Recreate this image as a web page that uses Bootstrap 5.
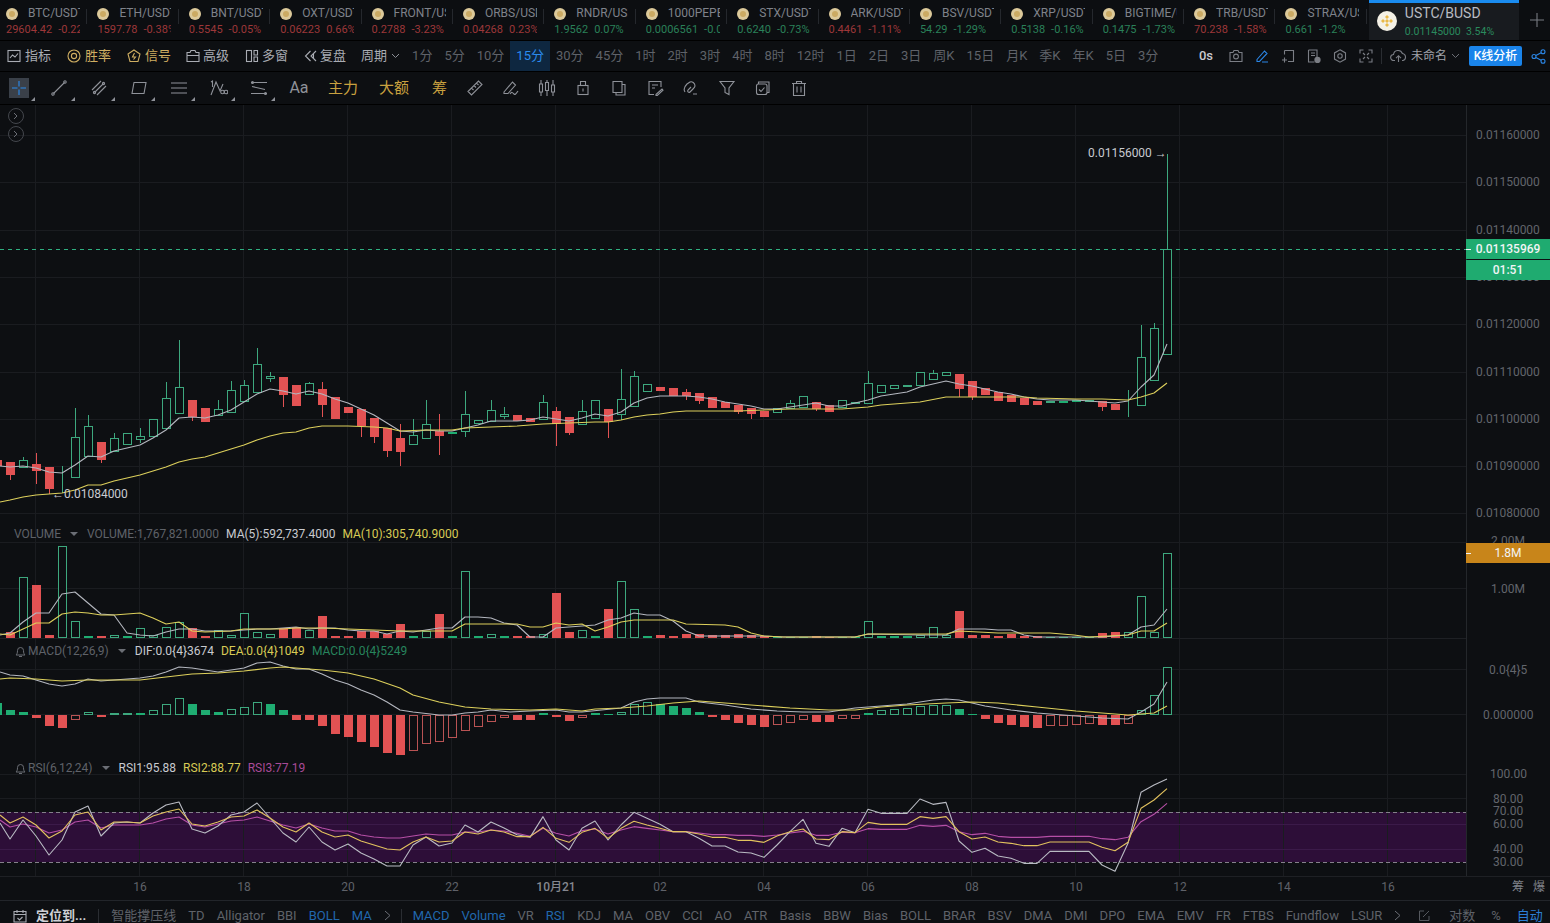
<!DOCTYPE html>
<html lang="zh">
<head>
<meta charset="utf-8">
<title>USTC/BUSD</title>
<link href="https://cdn.jsdelivr.net/npm/bootstrap@5.3.3/dist/css/bootstrap.min.css" rel="stylesheet">
<style>
  html, body { height: 100%; overflow: hidden; }
  body { background: #0d0f12; color: #8b8e95; font-family: Roboto, "Noto Sans CJK SC", sans-serif; font-size: 13px; }
  .page-shell { width: 1550px; height: 923px; }
  svg { display: block; }
  .ico { width: 14px; height: 14px; fill: none; stroke: currentColor; stroke-width: 1.1; flex: none; }

  /* ticker */
  .ticker-bar { height: 41px; border-bottom: 1px solid #000; background: #0c0e11; }
  .tick-item { width: 91.4px; flex: none; padding: 6px 0 0 6px; position: relative; }
  .tick-item::after { content: ""; position: absolute; right: 4px; top: 9px; height: 15px; border-right: 1px solid #25282d; }
  .tick-coin { width: 12px; height: 12px; border-radius: 50%; background: #dcc99a; flex: none; display: flex; align-items: center; justify-content: center; }
  .tick-coin::after { content: ""; width: 6px; height: 6px; border-radius: 50%; background: #cbaa63; }
  .tick-name { width: 52px; margin-left: 10px; overflow: hidden; white-space: nowrap; font-size: 12px; line-height: 15px; color: #7f828a; }
  .tick-vals { width: 74px; overflow: hidden; white-space: nowrap; font-size: 11px; line-height: 13px; margin-top: 2px; }
  .tick-vals span + span { margin-left: 6px; }
  .tick-down { color: #9c3739; }
  .tick-up { color: #2a8059; }
  .tick-active { width: 150px; flex: none; background: #181b1f; border-top: 3px solid #1a8cf0; padding: 1px 0 0 8px; margin-left: -2px; }
  .tick-active-coin { width: 20px; height: 20px; background: #f4f1e6; border-radius: 50%; flex: none; margin-top: 7px; }
  .tick-active-name { font-size: 14px; line-height: 18px; color: #b9bcc3; }
  .tick-active-vals { font-size: 10.5px; line-height: 13px; color: #2a8a5e; margin-top: 3px; }
  .tick-add { width: 31px; padding-left: 5px; color: #777a81; }

  /* toolbars */
  .period-bar { height: 31px; border-bottom: 1px solid #000; padding: 0 4px 0 7px; }
  .menu-item { color: #a9acb3; gap: 4px; }
  .menu-tight { gap: 3px; }
  .menu-gold { color: #cfae62; }
  .menu-group { gap: 16px; }
  .period-group { gap: 12px; margin-left: 12px; color: #5f6269; }
  .period-on { background: #0e2740; color: #2b8bee; margin: 0 -6px; padding: 0 6px; line-height: 30px; }
  .right-group { gap: 12px; color: #7b7e85; }
  .right-blue { color: #2b86e6; }
  .right-sep { width: 1px; height: 16px; background: #2a2d32; margin: 0 -4px; }
  .save-name { color: #a0a3aa; font-size: 12px; }
  .analysis-btn { background: #1a84ea; color: #fff; font-size: 12px; font-weight: 500; width: 53px; height: 20px; line-height: 20px; text-align: center; border-radius: 2px; margin: 0 -3px 0 -3px; white-space: nowrap; }
  .draw-bar { height: 33px; border-bottom: 1px solid #000; padding-left: 9px; gap: 20px; color: #8f9299; }
  .draw-tool { width: 20px; height: 20px; position: relative; display: flex; align-items: center; justify-content: center; flex: none; }
  .draw-tool .ico { width: 18px; height: 18px; }
  .draw-on { background: #3a4049; color: #2b8bee; }
  .draw-has-menu::after { content: ""; position: absolute; right: -6px; bottom: -3px; border-style: solid; border-width: 0 0 4px 4px; border-color: transparent transparent #8f9299 transparent; }
  .draw-word { color: #c9a13f; font-size: 15px; margin-left: -1px; }
  .draw-word-wide { margin-left: 1px; }
  .draw-word-solo { margin-left: 3px; }
  .draw-tail { gap: 16px; margin-left: -2px; }

  /* chart panes */
  .chart-pane { position: relative; overflow: hidden; }
  .chart-pane > svg { position: absolute; left: 0; top: 0; }
  .pane-main { height: 420px; }
  .pane-vol { height: 116px; }
  .pane-macd { height: 117px; }
  .pane-rsi { height: 118px; }
  .pane-legend { position: relative; font-size: 12px; line-height: 16px; gap: 7px; padding: 2px 0 0 14px; white-space: nowrap; }
  .pane-vol .pane-legend { padding-top: 1px; }
  .legend-name { color: #5f6269; }
  .legend-caret { width: 0; height: 0; border: 4px solid transparent; border-top-color: #6b6e75; border-bottom: 0; margin: 0 2px 0 9px; }
  .legend-white { color: #c8cad0; }
  .legend-yellow { color: #d8cb55; }
  .legend-green { color: #27845d; }
  .legend-pink { color: #a94b98; }
  .legend-bell { width: 13px; height: 13px; fill: none; stroke: #6b6e75; stroke-width: 1; margin-right: -6px; flex: none; }
  .fold-btns { position: absolute; left: 8px; top: 3px; }
  .fold-btn { width: 16px; height: 16px; border: 1px solid #44474d; border-radius: 50%; margin-bottom: 2px; color: #6b6e75; display: flex; align-items: center; justify-content: center; }
  .price-tag { position: absolute; left: 1466px; width: 84px; text-align: center; color: #f2f4f5; font-size: 12px; }
  .tag-price, .tag-vol { font-weight: 500; }
  .tag-price::before, .tag-vol::before { content: ""; position: absolute; left: 0; top: 10px; width: 5px; border-top: 1px solid #f2f4f5; }
  .tag-price { top: 134px; height: 20px; line-height: 20px; background: #1fab70; }
  .tag-time { top: 155px; height: 20px; line-height: 20px; background: #1fab70; font-weight: 500; }
  .tag-vol { top: 18px; height: 20px; line-height: 20px; background: #c8851a; font-weight: 400; }

  /* bottom */
  .time-axis { height: 24px; border-top: 1px solid #1e2024; padding-left: 88px; color: #5f6269; font-size: 12px; line-height: 21px; }
  .time-label { width: 104px; text-align: center; flex: none; }
  .time-month { color: #85888f; font-weight: 500; }
  .time-mode { gap: 9px; color: #7f828a; margin-left: 72px; }
  .bottom-bar { height: 23px; border-top: 1px solid #22252a; padding: 7px 0 0 13px; gap: 12px; font-size: 13px; color: #5f6269; white-space: nowrap; }
  .locate-text { color: #cfd1d6; font-weight: 700; margin-left: -3px; }
  .bottom-sep { width: 1px; height: 14px; background: #2a2d32; }
  .bottom-sep-mid { margin: 0 -1px 0 -2px; }
  .bottom-on { color: #2167ad; }
  .bottom-auto { color: #2b7fd4; margin-left: 4px; }
  .bottom-edit { margin-left: 6px; }
  .bottom-log { margin-left: 7px; }
</style>
</head>
<body>
<div class="page-shell d-flex flex-column">

  <!-- ticker tabs -->
  <div class="ticker-bar d-flex">
    <div id="tickers" class="d-flex"></div>
    <div class="tick-active d-flex gap-2">
      <div class="tick-active-coin">
        <svg viewBox="0 0 20 20" width="20" height="20"><g fill="#e9b949"><path d="M10 4l2 2-2 2-2-2z"/><path d="M5.5 8l2 2-2 2-2-2z" transform="translate(.5 0)"/><path d="M14.5 8l2 2-2 2-2-2z" transform="translate(-.5 0)"/><path d="M10 8l2 2-2 2-2-2z"/><path d="M10 12l2 2-2 2-2-2z"/></g></svg>
      </div>
      <div>
        <div class="tick-active-name">USTC/BUSD</div>
        <div class="tick-active-vals">0.01145000&nbsp; 3.54%</div>
      </div>
    </div>
    <div class="tick-add d-flex align-items-center justify-content-center">
      <svg class="ico" viewBox="0 0 14 14"><path d="M7 0v14M0 7h14"/></svg>
    </div>
  </div>

  <!-- period bar -->
  <div class="period-bar d-flex align-items-center">
    <div class="menu-group d-flex align-items-center">
      <div class="menu-item d-flex align-items-center"><svg class="ico" viewBox="0 0 14 14"><rect x="1" y="1.5" width="12" height="11"/><path d="M3 9l2.5-3 2.5 2 3-3.5"/></svg>指标</div>
      <div class="menu-item menu-gold d-flex align-items-center"><svg class="ico" viewBox="0 0 14 14"><circle cx="7" cy="7" r="6"/><circle cx="7" cy="7" r="2.6"/></svg>胜率</div>
      <div class="menu-item menu-gold d-flex align-items-center"><svg class="ico" viewBox="0 0 14 14"><path d="M7 1l6 4-2 7.5H3L1 5z"/><path d="M7.5 4L5.5 8h3l-2 2.5"/></svg>信号</div>
      <div class="menu-item menu-tight d-flex align-items-center" style="margin-left:-1px"><svg class="ico" viewBox="0 0 14 14"><path d="M1 12.5V3.5h3l1-2h4l1 2h3v9zM1 6.5h12"/></svg>高级</div>
      <div class="menu-item menu-tight d-flex align-items-center"><svg class="ico" viewBox="0 0 14 14"><rect x="1.5" y="1.5" width="5" height="11"/><path d="M9 1.5h3.5V6H9zM9 8h3.5v4.5H9z"/></svg>多窗</div>
      <div class="menu-item d-flex align-items-center" style="gap:2px"><svg class="ico" viewBox="0 0 14 14"><path d="M6.5 2L1.5 7l5 5M12 2L7 7l5 5M9.5 4.500v5"/></svg>复盘</div>
      <div class="menu-item d-flex align-items-center" style="margin-left:-1px">周期<svg width="9" height="6" viewBox="0 0 9 6" fill="none" stroke="#8b8e95"><path d="M1 1l3.5 3.5L8 1"/></svg></div>
    </div>
    <div class="period-group d-flex align-items-center">
      <span>1分</span><span>5分</span><span>10分</span><span class="period-on">15分</span><span>30分</span><span>45分</span><span>1时</span><span>2时</span><span>3时</span><span>4时</span><span>8时</span><span>12时</span><span>1日</span><span>2日</span><span>3日</span><span>周K</span><span>15日</span><span>月K</span><span>季K</span><span>年K</span><span>5日</span><span>3分</span>
    </div>
    <div class="right-group d-flex align-items-center ms-auto">
      <span class="legend-white fw-medium me-1">0s</span>
      <svg class="ico" viewBox="0 0 14 14"><path d="M1 3.5h3l1-2h4l1 2h3v9H1z"/><circle cx="7" cy="7.5" r="2.4"/></svg>
      <svg class="ico right-blue" viewBox="0 0 14 14"><path d="M2 10.5L9.5 2l2.5 2.5L4.5 12.5H2zM7 13h6"/></svg>
      <svg class="ico" viewBox="0 0 14 14"><path d="M3.5 1.5h9v11H7M1 11h5M3.5 8.5v5M3.5 1.5v4"/></svg>
      <svg class="ico" viewBox="0 0 14 14"><path d="M1.5 1h8.5v7M1.5 1v12h6M4 4h4M4 6.5h4"/><circle cx="10.5" cy="11" r="2.6" fill="#7b7e85"/></svg>
      <svg class="ico" viewBox="0 0 14 14"><path d="M7 .8l5.5 3.1v6.2L7 13.2 1.5 10.1V3.9z"/><circle cx="7" cy="7" r="2.2"/></svg>
      <svg class="ico" viewBox="0 0 14 14"><path d="M1 4.5V1h3.5M9.5 1H13v3.5M13 9.5V13H9.5M4.500 13H1V9.5M4 4l2 2M10 4L8 6M10 10L8 8M4 10l2-2"/></svg>
      <span class="right-sep"></span>
      <div class="d-flex align-items-center gap-1">
        <svg class="ico" style="width:17px" viewBox="0 0 17 14"><path d="M5 11.5H3.8a3 3 0 0 1-.3-6A4.6 4.6 0 0 1 12.4 4.5a3.6 3.6 0 0 1 .6 7H12M8.5 13V7M6 9.2l2.5-2.5L11 9.2"/></svg>
        <span class="save-name">未命名</span>
        <svg width="9" height="6" viewBox="0 0 9 6" fill="none" stroke="#6b6e75"><path d="M1 1l3.5 3.5L8 1"/></svg>
      </div>
      <span class="analysis-btn">K线分析</span>
      <svg class="ico right-blue" style="width:15px;height:15px" viewBox="0 0 15 15"><circle cx="3" cy="7.5" r="2"/><circle cx="12" cy="2.8" r="2"/><circle cx="12" cy="12.2" r="2"/><path d="M4.8 6.5l5.4-2.8M4.8 8.5l5.4 2.8"/></svg>
    </div>
  </div>

  <!-- drawing tools -->
  <div class="draw-bar d-flex align-items-center">
    <div class="draw-tool draw-on draw-has-menu"><svg class="ico" viewBox="0 0 18 18"><path d="M9 2v5.5M9 10.5V16M2 9h5.5M10.5 9H16"/></svg></div>
    <div class="draw-tool draw-has-menu"><svg class="ico" viewBox="0 0 18 18"><path d="M3.500 14.500L14.500 3.500"/><circle cx="3" cy="15" r="1.2"/><circle cx="15" cy="3" r="1.2"/></svg></div>
    <div class="draw-tool draw-has-menu"><svg class="ico" viewBox="0 0 18 18"><path d="M2 11L11 2M4.500 13.500L13.500 4.500M7 16L16 7"/><circle cx="4.500" cy="13.500" r="1.1"/><circle cx="13.500" cy="4.500" r="1.1"/></svg></div>
    <div class="draw-tool draw-has-menu"><svg class="ico" viewBox="0 0 18 18"><path d="M4 3.500h12l-2 11H2z"/></svg></div>
    <div class="draw-tool draw-has-menu"><svg class="ico" viewBox="0 0 18 18"><path d="M1 4h16M1 9h16M1 14h16"/></svg></div>
    <div class="draw-tool draw-has-menu"><svg class="ico" viewBox="0 0 18 18"><path d="M1 3l1.500-1v6M1 16L6 3l4 9 3-7"/><circle cx="12.500" cy="13" r="1.800"/><circle cx="16" cy="13" r="1.800"/></svg></div>
    <div class="draw-tool draw-has-menu"><svg class="ico" viewBox="0 0 18 18"><path d="M1 3.500h16M1 14.500h16M2 7.500l13 3"/><circle cx="2.500" cy="3.500" r="1"/><circle cx="15.500" cy="14.500" r="1"/></svg></div>
    <div class="draw-tool fs-6">Aa</div>
    <span class="draw-word">主力</span>
    <span class="draw-word draw-word-wide">大额</span>
    <span class="draw-word draw-word-solo">筹</span>
    <div class="d-flex draw-tail">
      <div class="draw-tool"><svg class="ico" viewBox="0 0 18 18"><path d="M2 12.500L12.500 2 16 5.500 5.500 16zM5.500 9l2 2M8 6.500l2 2M10.500 4l2 2"/></svg></div>
      <div class="draw-tool"><svg class="ico" viewBox="0 0 18 18"><path d="M2 13L10.500 3l3 3L6 14.500H2zM8 15c2-3 3-1 4 0s2 0 4-3"/></svg></div>
      <div class="draw-tool"><svg class="ico" viewBox="0 0 18 18"><path d="M3 1v16M9 1v16M15 1v16"/><path d="M1.500 5h3v8h-3zM7.500 3.500h3v8h-3zM13.500 6h3v7h-3z" fill="#0d0f12"/></svg></div>
      <div class="draw-tool"><svg class="ico" viewBox="0 0 18 18"><rect x="4" y="6.500" width="10" height="9"/><path d="M6.500 6.500V2.500h5v4M9 9.500v3"/></svg></div>
      <div class="draw-tool"><svg class="ico" viewBox="0 0 18 18"><path d="M3 2.500h9v11H3zM12 5.500h3V16H6v-2.500"/></svg></div>
      <div class="draw-tool"><svg class="ico" viewBox="0 0 18 18"><path d="M15 8V2.500H3v13h5M6 6h6M6 9h3"/><path d="M10 15.500l6-5.500 1 1.200-5.700 5.300H10z"/></svg></div>
      <div class="draw-tool"><svg class="ico" viewBox="0 0 18 18"><path d="M3 13c-2-3 0-6 2-8l3-2c2-1 5 1 5 4 0 1-1 2-2 3l-3 3c-1 1-3 0-2-2l3-3M11 15h4"/></svg></div>
      <div class="draw-tool"><svg class="ico" viewBox="0 0 18 18"><path d="M2 2.500h14L11 9v6.500l-4-2V9z"/></svg></div>
      <div class="draw-tool"><svg class="ico" viewBox="0 0 18 18"><path d="M4.500 5V3H15v10.500h-2"/><rect x="2.500" y="5" width="10.500" height="10.500" rx="2"/><path d="M5 10.500l2 2 3.500-4"/></svg></div>
      <div class="draw-tool"><svg class="ico" viewBox="0 0 18 18"><path d="M2 4.500h14M6.500 4.500v-2h5v2M3.500 4.500v12h11v-12M7 7.500v6M11 7.500v6"/></svg></div>
    </div>
  </div>

  <!-- main chart -->
  <div class="chart-pane pane-main" data-top="105">
    <div class="fold-btns">
      <div class="fold-btn"><svg width="6" height="8" viewBox="0 0 6 8" fill="none" stroke="currentColor"><path d="M1 1l3 3-3 3"/></svg></div>
      <div class="fold-btn"><svg width="6" height="8" viewBox="0 0 6 8" fill="none" stroke="currentColor"><path d="M1 1l3 3-3 3"/></svg></div>
    </div>
    <div class="price-tag tag-price">0.01135969</div>
    <div class="price-tag tag-time">01:51</div>
  </div>

  <!-- volume -->
  <div class="chart-pane pane-vol" data-top="525">
    <div class="pane-legend d-flex align-items-center">
      <span class="legend-name d-flex align-items-center">VOLUME<i class="legend-caret"></i></span>
      <span class="legend-name">VOLUME:1,767,821.0000</span>
      <span class="legend-white">MA(5):592,737.4000</span>
      <span class="legend-yellow">MA(10):305,740.9000</span>
    </div>
    <div class="price-tag tag-vol">1.8M</div>
  </div>

  <!-- macd -->
  <div class="chart-pane pane-macd" data-top="641">
    <div class="pane-legend d-flex align-items-center">
      <svg class="legend-bell" viewBox="0 0 13 13"><path d="M2 10h9c-1-1-1.5-2-1.5-4.5a3 3 0 0 0-6 0C3.500 8 3 9 2 10zM5 11.500h3"/></svg>
      <span class="legend-name d-flex align-items-center">MACD(12,26,9)<i class="legend-caret"></i></span>
      <span class="legend-white">DIF:0.0{4}3674</span>
      <span class="legend-yellow">DEA:0.0{4}1049</span>
      <span class="legend-green">MACD:0.0{4}5249</span>
    </div>
  </div>

  <!-- rsi -->
  <div class="chart-pane pane-rsi" data-top="758">
    <div class="pane-legend d-flex align-items-center">
      <svg class="legend-bell" viewBox="0 0 13 13"><path d="M2 10h9c-1-1-1.5-2-1.5-4.5a3 3 0 0 0-6 0C3.500 8 3 9 2 10zM5 11.500h3"/></svg>
      <span class="legend-name d-flex align-items-center">RSI(6,12,24)<i class="legend-caret"></i></span>
      <span class="legend-white">RSI1:95.88</span>
      <span class="legend-yellow">RSI2:88.77</span>
      <span class="legend-pink">RSI3:77.19</span>
    </div>
  </div>

  <!-- time axis -->
  <div class="time-axis d-flex">
    <span class="time-label">16</span><span class="time-label">18</span><span class="time-label">20</span><span class="time-label">22</span><span class="time-label time-month">10月21</span><span class="time-label">02</span><span class="time-label">04</span><span class="time-label">06</span><span class="time-label">08</span><span class="time-label">10</span><span class="time-label">12</span><span class="time-label">14</span><span class="time-label">16</span>
    <span class="time-mode d-flex"><span>筹</span><span>爆</span></span>
  </div>

  <!-- indicator list -->
  <div class="bottom-bar d-flex align-items-center">
    <svg class="ico" viewBox="0 0 14 14" style="color:#a9acb3"><path d="M1 2.500h12V13H1zM1 5.500h12M4 1v3M10 1v3M4.500 9l2 2 3-3"/></svg>
    <span class="locate-text">定位到...</span>
    <span class="bottom-sep"></span>
    <span>智能撑压线</span><span>TD</span><span>Alligator</span><span>BBI</span><span class="bottom-on">BOLL</span><span class="bottom-on">MA</span>
    <svg width="7" height="11" viewBox="0 0 7 11" fill="none" stroke="#6b6e75"><path d="M1 1l5 4.500-5 4.500"/></svg>
    <span class="bottom-sep bottom-sep-mid"></span>
    <span class="bottom-on">MACD</span><span class="bottom-on">Volume</span><span>VR</span><span class="bottom-on">RSI</span><span>KDJ</span><span>MA</span><span>OBV</span><span>CCI</span><span>AO</span><span>ATR</span><span>Basis</span><span>BBW</span><span>Bias</span><span>BOLL</span><span>BRAR</span><span>BSV</span><span>DMA</span><span>DMI</span><span>DPO</span><span>EMA</span><span>EMV</span><span>FR</span><span>FTBS</span><span>Fundflow</span><span>LSUR</span>
    <svg width="7" height="11" viewBox="0 0 7 11" fill="none" stroke="#6b6e75"><path d="M1 1l5 4.500-5 4.500"/></svg>
    <svg class="bottom-edit" width="11" height="11" viewBox="0 0 11 11" fill="none" stroke="#55585e"><path d="M10 6v4.500H.5V1H5M4 7l6-6"/></svg>
    <span class="bottom-log">对数</span><span class="ms-1">%</span><span class="bottom-auto">自动</span>
  </div>
</div>

<script src="https://cdn.jsdelivr.net/npm/bootstrap@5.3.3/dist/js/bootstrap.bundle.min.js"></script>
<script>
  const tickers = [
    ['BTC/USDT', '29604.42', '-0.22%', 0], ['ETH/USDT', '1597.78', '-0.38%', 0], ['BNT/USDT', '0.5545', '-0.05%', 0],
    ['OXT/USDT', '0.06223', '0.66%', 0], ['FRONT/USDT', '0.2788', '-3.23%', 0], ['ORBS/USDT', '0.04268', '0.23%', 0],
    ['RNDR/USDT', '1.9562', '0.07%', 1], ['1000PEPE/USDT', '0.0006561', '-0.05%', 1], ['STX/USDT', '0.6240', '-0.73%', 1],
    ['ARK/USDT', '0.4461', '-1.11%', 0], ['BSV/USDT', '54.29', '-1.29%', 1], ['XRP/USDT', '0.5138', '-0.16%', 1],
    ['BIGTIME/USDT', '0.1475', '-1.73%', 1], ['TRB/USDT', '70.238', '-1.58%', 0], ['STRAX/USDT', '0.661', '-1.2%', 1]
  ];
  document.getElementById('tickers').innerHTML = tickers.map(t => `
    <div class="tick-item">
      <div class="d-flex align-items-center"><i class="tick-coin"></i><div class="tick-name">${t[0]}</div></div>
      <div class="tick-vals ${t[3] ? 'tick-up' : 'tick-down'}"><span>${t[1]}</span><span>${t[2]}</span></div>
    </div>`).join('');

  const RED = '#e25253', GREEN = '#3da87e', FILL = '#1fad72', WHITE = '#b4b7bf', YELLOW = '#ddd05c', PINK = '#b64fa6', BG = '#0d0f12', GRID = '#1a1c20';
  const AXIS_X = 1466;
  const gridX = [35.5, 139.5, 243.5, 347.5, 451.5, 555.5, 659.5, 763.5, 867.5, 971.5, 1075.5, 1179.5, 1283.5, 1387.5];
  const barX = i => 10 + 13 * i;

  // [kind, top, bottom, high, low], first entry sits at x=-3
  const candles = [
    ['r',460,466,460,466], ['r',462,475,462,480], ['g',460,468,457,468], ['r',464,471,453,484], ['r',467,489,467,494],
    ['g',477,478,466,493], ['g',437,478,408,478], ['g',426,457,415,457], ['r',442,460,442,463], ['g',438,452,433,452],
    ['g',433,445,433,445], ['g',436,440,428,443], ['g',419,437,419,437], ['g',398,429,382,429], ['g',387,414,340,414],
    ['r',400,417,400,421], ['r',408,422,408,422], ['g',409,416,400,416], ['g',390,413,381,413], ['g',385,402,380,402],
    ['g',364,393,348,393], ['g',376,379,372,382], ['r',377,395,377,407], ['r',385,406,385,406], ['g',383,395,382,395],
    ['r',389,405,382,417], ['r',397,419,397,419], ['r',407,413,407,413], ['r',409,426,409,437], ['r',418,437,418,443],
    ['r',428,451,428,457], ['r',438,452,424,466], ['g',435,445,419,445], ['g',424,439,400,439], ['r',431,436,414,455],
    ['f',432,434,432,434], ['g',414,432,391,437], ['g',420,424,420,424], ['g',410,422,400,422], ['g',414,417,407,419],
    ['r',415,421,415,421], ['r',418,422,418,422], ['g',402,420,395,420], ['r',411,424,407,446], ['r',417,433,417,435],
    ['g',411,425,400,425], ['g',400,419,400,419], ['r',409,422,409,438], ['g',399,415,369,420], ['g',376,407,371,407],
    ['g',384,392,384,392], ['r',387,391,387,391], ['r',388,396,388,396], ['r',392,396,389,400], ['r',393,401,393,404],
    ['r',397,408,397,408], ['r',402,408,402,408], ['r',405,412,405,414], ['r',408,414,408,419], ['r',411,417,411,417],
    ['g',408,413,408,413], ['g',403,409,400,409], ['g',396,408,396,408], ['r',402,409,402,411], ['r',405,412,405,412],
    ['g',400,408,400,408], ['g',402,404,402,404], ['g',383,404,371,404], ['g',385,393,385,393], ['g',385,389,385,389],
    ['g',385,387,385,387], ['g',372,386,372,386], ['g',373,380,370,380], ['g',372,376,372,376], ['r',374,389,374,397],
    ['r',381,397,381,400], ['r',388,395,388,395], ['r',392,401,392,401], ['r',395,402,395,402], ['r',398,405,398,405],
    ['r',401,405,401,405], ['g',401,403,401,403], ['f',401,403,401,403], ['f',400,402,400,402], ['f',400,402,400,402],
    ['r',401,407,401,411], ['r',404,410,404,410], ['g',405,406,390,417], ['g',357,406,325,406], ['g',328,381,323,381],
    ['g',249,355,154,355]
  ];

  const ma5 = [[0,466],[10,467],[23,466],[36,468],[49,472],[62,473],[75,465],[88,456],[101,457],[114,451],[140,445],[153,438],[166,430],[179,418],[192,417],[205,418],[218,415],[231,410],[244,402],[257,394],[270,389],[283,391],[296,394],[309,391],[322,394],[335,399],[348,403],[361,409],[374,415],[387,423],[400,431],[413,432],[426,430],[439,431],[452,431],[465,428],[478,425],[491,421],[504,421],[517,421],[530,420],[543,417],[556,419],[569,421],[582,418],[595,414],[608,416],[621,412],[634,403],[647,398],[660,396],[673,396],[686,396],[699,397],[712,399],[725,402],[738,404],[751,406],[764,409],[777,409],[790,407],[803,405],[816,403],[829,406],[842,406],[855,403],[868,400],[881,396],[894,394],[907,392],[920,387],[933,384],[946,381],[959,384],[972,386],[985,389],[998,392],[1011,394],[1024,397],[1037,399],[1050,400],[1063,400],[1076,400],[1089,401],[1102,402],[1115,403],[1128,401],[1141,387],[1154,375],[1167,344]];
  const ma10 = [[0,502],[10,500],[23,497],[36,495],[49,494],[62,493],[75,490],[88,485],[101,485],[114,481],[127,478],[140,475],[153,471],[166,467],[179,462],[192,459],[205,457],[218,453],[231,449],[244,445],[257,440],[270,436],[283,433],[296,432],[309,428],[322,426],[348,426],[374,427],[387,428],[400,431],[426,430],[452,430],[465,428],[491,427],[517,426],[543,424],[569,423],[595,422],[608,422],[621,420],[634,417],[647,415],[660,414],[673,412],[686,411],[738,411],[764,410],[790,409],[842,409],[868,407],[881,405],[907,403],[920,402],[946,397],[972,397],[1024,397],[1037,398],[1076,399],[1102,399],[1128,400],[1141,397],[1154,393],[1167,383]];

  const volBars = 'r632 g577 r585 r635 g546 g621 f636 r636 g635 f636 g628 g635 g627 g622 r628 r636 g630 g635 g613 g632 g634 r628 r627 g630 r616 r636 r636 r631 r631 r634 r624 f636 g631 r614 f636 g571 f636 g634 f636 r636 r636 g634 r593 r632 g630 f636 r609 g581 g609 f636 r635 r636 r634 r634 r635 r635 r634 r635 r636 f637 f637 f637 r636 r637 f637 f637 g621 f636 f636 f636 g635 g627 g635 r611 r635 r635 r636 r634 r636 r636 f637 f637 f637 f637 r633 r632 g632 g596 g632 g553'.split(' ');
  const volMa5 = [[0,635],[10,633],[23,622],[36,613],[49,613],[62,594],[75,592],[88,603],[101,614],[114,615],[127,633],[140,635],[153,636],[166,632],[179,629],[192,629],[205,631],[231,631],[244,630],[257,629],[270,629],[283,628],[296,627],[309,629],[322,628],[335,628],[348,630],[361,631],[374,631],[387,634],[400,631],[413,632],[426,630],[439,628],[452,628],[465,617],[478,617],[491,618],[504,623],[517,625],[530,637],[543,637],[556,628],[569,627],[595,625],[608,620],[621,618],[634,613],[647,615],[660,615],[673,621],[686,631],[699,636],[725,636],[764,636],[783,637],[855,637],[868,634],[920,635],[946,635],[959,629],[985,629],[998,630],[1011,630],[1024,635],[1037,637],[1102,637],[1128,635],[1141,627],[1154,625],[1167,609]];
  const volMa10 = [[0,634],[10,635],[23,629],[36,623],[49,623],[62,614],[75,612],[88,613],[101,615],[114,615],[127,614],[140,613],[153,618],[166,624],[179,622],[192,631],[205,632],[231,631],[244,629],[283,629],[296,628],[322,628],[348,629],[374,630],[400,631],[439,631],[452,631],[465,624],[491,624],[517,624],[530,627],[543,627],[556,623],[569,625],[582,624],[595,631],[608,627],[621,622],[634,620],[673,620],[686,624],[725,625],[738,627],[751,633],[764,636],[783,637],[855,637],[868,634],[946,634],[959,631],[998,633],[1050,633],[1074,635],[1089,637],[1128,635],[1141,631],[1154,631],[1167,623]];

  // kind + y of the bar end, zero line at 715; first entry sits at x=-3
  const macdBars = 'f703 f710 f712 r718 r726 r728 h720 g712 r717 g713 g713 f713 g710 g704 g698 f704 f710 f712 g709 g707 g702 f704 f710 r720 r720 r726 r734 r737 r742 r747 r753 r755 h751 h744 h742 h738 h731 h727 h722 h718 r720 r720 f713 r717 r721 h718 f713 f714 g712 g704 g702 f704 f706 f708 f712 r717 r720 r723 r725 r727 h725 h723 h720 r722 r722 h719 h719 f713 g710 g709 g708 g706 g705 g705 f709 f714 r719 r723 r725 r727 r728 h726 h726 h725 h724 r725 r725 h724 g710 g695 g667'.split(' ');
  const difLine = [[0,672],[10,675],[23,676],[36,680],[49,684],[62,686],[75,684],[88,679],[101,681],[114,680],[140,678],[153,676],[166,672],[179,667],[192,668],[218,672],[244,668],[257,663],[270,662],[283,666],[296,669],[309,669],[322,674],[335,680],[348,684],[361,690],[374,695],[387,702],[400,710],[413,712],[439,715],[452,715],[465,713],[478,712],[491,710],[510,712],[530,711],[556,710],[569,712],[582,712],[621,708],[634,702],[647,699],[660,698],[686,698],[699,702],[725,705],[751,709],[777,711],[803,712],[829,712],[855,708],[881,706],[907,704],[933,700],[946,699],[959,700],[985,706],[1011,710],[1037,713],[1076,716],[1102,718],[1128,719],[1141,712],[1154,704],[1167,682]];
  const deaLine = [[0,679],[10,678],[36,679],[62,681],[88,680],[114,680],[140,680],[166,677],[192,674],[218,673],[244,671],[270,668],[283,667],[309,669],[322,670],[348,673],[374,679],[400,688],[413,695],[439,702],[465,707],[491,709],[530,710],[556,709],[582,711],[595,709],[621,708],[647,706],[673,703],[699,701],[725,703],[751,705],[790,708],[829,710],[855,710],[881,707],[907,705],[946,703],[972,702],[998,703],[1037,707],[1076,711],[1115,714],[1128,715],[1154,713],[1167,706]];

  // rsi y values per bar, from x=10
  const rsiA = [839,820,836,855,840,812,806,836,823,822,823,813,805,802,829,833,826,815,812,803,818,833,842,827,842,850,844,853,859,866,866,845,837,846,843,825,832,822,828];
  const rsiB = [823,817,825,838,831,815,812,830,822,822,823,816,812,809,824,826,822,817,816,810,818,827,832,823,832,837,835,841,845,849,850,842,837,842,841,832,834,830,832];
  const rsiC = [827,824,827,833,830,822,820,828,825,825,825,823,819,817,825,827,824,821,820,817,821,825,828,824,828,831,831,835,837,838,838,836,834,835,835,832,832,830,831];
  // same from x=517, in zoomed units (760 + v/3)
  const rsiA2 = [224,232,170,240,270,205,183,240,195,157,175,193,215,215,235,258,258,276,279,292,255,215,178,250,259,205,218,148,160,160,160,117,133,127,243,277,265,288,295,310,310,274,274,274,274,315,334,250,97,75,57];
  const rsiB2 = [230,230,202,235,247,217,205,235,205,184,195,205,215,215,222,232,232,241,241,247,228,215,207,237,239,215,218,187,193,193,193,170,175,170,215,237,231,246,250,257,257,246,246,246,246,262,272,247,145,120,86];
  const rsiC2 = [220,229,205,220,228,212,207,222,210,200,205,210,215,215,219,224,224,226,226,229,225,219,214,226,226,217,218,206,208,208,208,196,199,196,215,224,220,229,232,232,232,229,229,229,229,236,239,232,185,163,130];
  const rsiPoints = (first, second, startY) => {
    const pts = [[0, startY]];
    first.forEach((y, i) => pts.push([barX(i), y]));
    second.forEach((v, i) => pts.push([barX(39 + i), 760 + v / 3]));
    return pts;
  };

  const polyline = (pts, color, w = 1.1) => `<polyline points="${pts.map(p => p.join(',')).join(' ')}" fill="none" stroke="${color}" stroke-width="${w}" stroke-linejoin="round"/>`;
  const hLine = (y, color = GRID, extra = '') => `<line x1="0" x2="${AXIS_X}" y1="${y}" y2="${y}" stroke="${color}" ${extra}/>`;
  const vLines = (top, bottom) => gridX.map(x => `<line x1="${x}" x2="${x}" y1="${top}" y2="${bottom}" stroke="${GRID}"/>`).join('')
    + `<line x1="${AXIS_X + .5}" x2="${AXIS_X + .5}" y1="${top}" y2="${bottom}" stroke="#24272b"/>`;
  const axisText = (x, y, text) => `<text x="${x}" y="${y + 4}" fill="#62656c" font-size="12">${text}</text>`;

  function barShape(kind, cx, top, bottom) {
    if (bottom - top < 1) bottom = top + 1;
    if (kind === 'r') return `<rect x="${cx - 4}" y="${top}" width="9" height="${bottom - top}" fill="${RED}"/>`;
    if (kind === 'f') return `<rect x="${cx - 4}" y="${top}" width="9" height="${bottom - top}" fill="${FILL}"/>`;
    const color = kind === 'h' ? '#b95354' : GREEN;
    return `<rect x="${cx - 3.5}" y="${top + .5}" width="8" height="${bottom - top - 1}" fill="${BG}" stroke="${color}"/>`;
  }

  function addChart(pane, height, inner) {
    const top = +pane.dataset.top;
    pane.insertAdjacentHTML('afterbegin', `<svg width="1550" height="${height}" viewBox="0 ${top} 1550 ${height}" font-family="Roboto, sans-serif">${inner}</svg>`);
  }

  function drawMain() {
    let s = vLines(105, 525);
    const prices = [['0.01160000',135],['0.01150000',182],['0.01140000',230],['0.01130000',277],['0.01120000',324],['0.01110000',372],['0.01100000',419],['0.01090000',466],['0.01080000',513]];
    prices.forEach(p => { s += hLine(p[1] + .5) + axisText(1476, p[1], p[0]); });
    candles.forEach((c, i) => {
      const cx = barX(i - 1);
      const color = c[0] === 'r' ? RED : GREEN;
      s += `<line x1="${cx + .5}" x2="${cx + .5}" y1="${c[3]}" y2="${c[4]}" stroke="${color}"/>`;
      s += barShape(c[0], cx, c[1], c[2]);
    });
    s += polyline(ma5, WHITE) + polyline(ma10, YELLOW);
    s += `<line x1="0" x2="1466" y1="249.500" y2="249.500" stroke="#2fae80" stroke-dasharray="4 4"/>`;
    s += `<text x="1088" y="157" fill="#c8cad0" font-size="12">0.01156000 →</text>`;
    s += `<text x="52" y="498" fill="#c8cad0" font-size="12">←0.01084000</text>`;
    return s;
  }

  function drawVolume() {
    let s = vLines(525, 641) + hLine(542.5) + hLine(588.5) + hLine(638.5, '#1e2024');
    s += axisText(1491, 541, '2.00M') + axisText(1491, 589, '1.00M');
    volBars.forEach((b, i) => { s += barShape(b[0], barX(i), +b.slice(1), 638); });
    s += polyline(volMa5, WHITE) + polyline(volMa10, YELLOW);
    return s;
  }

  function drawMacd() {
    let s = vLines(641, 758) + hLine(669.5) + hLine(714.5);
    s += axisText(1489, 670, '0.0{4}5') + axisText(1483, 715, '0.000000');
    macdBars.forEach((b, i) => {
      const y = +b.slice(1);
      s += barShape(b[0], barX(i - 1), Math.min(y, 715), Math.max(y, 715));
    });
    s += polyline(difLine, WHITE) + polyline(deaLine, YELLOW);
    return s;
  }

  function drawRsi() {
    let s = `<rect x="0" y="812" width="${AXIS_X}" height="50" fill="#2d0e38"/>`;
    s += vLines(758, 876);
    [774.5, 798.5, 824.5, 849.5].forEach(y => { s += hLine(y, y > 812 ? '#3b1a49' : GRID); });
    s += hLine(812.5, '#84808a', 'stroke-dasharray="4 3"') + hLine(862.5, '#84808a', 'stroke-dasharray="4 3"');
    [['100.00',774,1490],['80.00',799,1493],['70.00',811,1493],['60.00',824,1493],['40.00',849,1493],['30.00',862,1493]].forEach(t => { s += axisText(t[2], t[1], t[0]); });
    s += polyline(rsiPoints(rsiC, rsiC2, 820), PINK);
    s += polyline(rsiPoints(rsiA, rsiA2, 823), '#b9bbc3');
    s += polyline(rsiPoints(rsiB, rsiB2, 815), '#e2c25e');
    return s;
  }

  addChart(document.querySelector('.pane-main'), 420, drawMain());
  addChart(document.querySelector('.pane-vol'), 116, drawVolume());
  addChart(document.querySelector('.pane-macd'), 117, drawMacd());
  addChart(document.querySelector('.pane-rsi'), 118, drawRsi());
</script>
</body>
</html>
